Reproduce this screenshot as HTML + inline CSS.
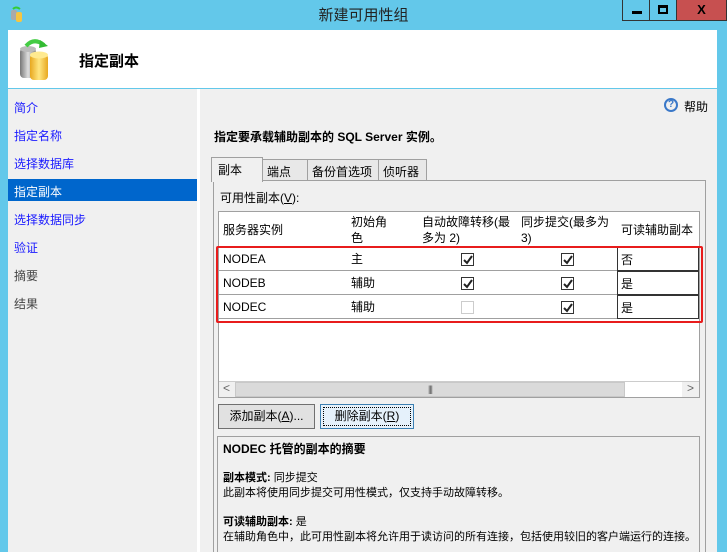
<!DOCTYPE html>
<html><head><meta charset="utf-8"><style>
*{box-sizing:border-box;margin:0;padding:0}
body{width:727px;height:552px;overflow:hidden;background:#63c8ea;font-family:"Liberation Sans","Noto Sans CJK SC",sans-serif;font-size:12px;color:#000;position:relative}
.a{position:absolute}
.nav div{position:absolute;left:6px;color:#1a1aff;font-size:12px}
.cell{position:absolute;border-right:1px solid #a0a0a0;border-bottom:1px solid #a0a0a0;padding-left:4px;display:flex;align-items:center;background:#fff}
.cb{position:absolute;width:13px;height:13px;border:1px solid #333;background:#fff}
.cb svg{position:absolute;left:1px;top:1px}
</style></head><body>
<div class="a" style="left:10px;top:6px;width:14px;height:16px">
<svg width="14" height="16"><rect x="1" y="4" width="6" height="10" rx="2" fill="#aaa"/><rect x="6" y="6" width="6" height="10" rx="2" fill="#f5c542"/><path d="M3 3 q3-3 7 0" stroke="#3c3" stroke-width="2" fill="none"/></svg></div>
<div class="a" style="left:0;top:4px;width:727px;text-align:center;font-size:15px;color:#222">新建可用性组</div>
<div class="a" style="left:622px;top:0;width:28px;height:21px;border:1px solid #333;border-top:none;background:#63c8ea"><div class="a" style="left:9px;top:11px;width:10px;height:3px;background:#000"></div></div>
<div class="a" style="left:649px;top:0;width:28px;height:21px;border:1px solid #333;border-top:none;background:#63c8ea"><div class="a" style="left:8px;top:5px;width:10px;height:9px;border:2px solid #000;border-top-width:3px"></div></div>
<div class="a" style="left:676px;top:0;width:51px;height:21px;border:1px solid #333;border-top:none;background:#c75050;color:#000;font-weight:bold;text-align:center;line-height:19px;font-size:13px">X</div>
<div class="a" style="left:8px;top:30px;width:709px;height:58px;background:#fff"></div>
<div class="a" style="left:18px;top:38px;width:42px;height:44px">
<svg width="42" height="44"><defs><linearGradient id="g" x1="0" x2="1"><stop offset="0" stop-color="#777"/><stop offset=".5" stop-color="#ddd"/><stop offset="1" stop-color="#888"/></linearGradient><linearGradient id="y" x1="0" x2="1"><stop offset="0" stop-color="#e8a820"/><stop offset=".5" stop-color="#ffe680"/><stop offset="1" stop-color="#e8a820"/></linearGradient></defs>
<rect x="2" y="10" width="16" height="30" rx="4" fill="url(#g)"/><ellipse cx="10" cy="11" rx="8" ry="3" fill="#bbb"/>
<rect x="12" y="16" width="18" height="26" rx="4" fill="url(#y)"/><ellipse cx="21" cy="17" rx="9" ry="3.5" fill="#ffea90"/>
<path d="M8 8 q8-9 18 -1" stroke="#4c4" stroke-width="4" fill="none"/><path d="M22 2 l8 6 -9 2z" fill="#3b3"/></svg></div>
<div class="a" style="left:79px;top:50px;font-size:15px;font-weight:bold">指定副本</div>
<div class="a nav" style="left:8px;top:89px;width:189px;height:463px;background:#f0f0f0">
<div style="top:10px">简介</div><div style="top:38px">指定名称</div><div style="top:66px">选择数据库</div>
<div style="left:0;top:90px;width:189px;height:22px;background:#0066cc"></div>
<div style="top:94px;color:#fff">指定副本</div>
<div style="top:122px">选择数据同步</div><div style="top:150px">验证</div>
<div style="top:178px;color:#444">摘要</div><div style="top:206px;color:#444">结果</div></div>
<div class="a" style="left:197px;top:89px;width:3px;height:463px;background:#fff"></div>
<div class="a" style="left:200px;top:89px;width:517px;height:463px;background:#f0f0f0"></div>
<div class="a" style="left:664px;top:98px;width:14px;height:14px;border-radius:50%;border:2px solid #3a78c8;color:#3a78c8;font-size:10px;font-weight:bold;text-align:center;line-height:10px">?</div>
<div class="a" style="left:684px;top:98px">帮助</div>
<div class="a" style="left:214px;top:128px;font-weight:bold">指定要承载辅助副本的 SQL Server 实例。</div>
<div class="a" style="left:213px;top:180px;width:493px;height:372px;border:1px solid #a0a0a0;border-bottom:none;background:#f0f0f0"></div>
<div class="a" style="left:262px;top:159px;width:46px;height:22px;border:1px solid #a0a0a0;background:#e8e8e8;padding:3px 4px">端点</div>
<div class="a" style="left:307px;top:159px;width:72px;height:22px;border:1px solid #a0a0a0;background:#e8e8e8;padding:3px 4px">备份首选项</div>
<div class="a" style="left:378px;top:159px;width:49px;height:22px;border:1px solid #a0a0a0;background:#e8e8e8;padding:3px 4px">侦听器</div>
<div class="a" style="left:211px;top:157px;width:52px;height:25px;border:1px solid #a0a0a0;border-bottom:none;background:#f0f0f0;padding:3px 6px">副本</div>
<div class="a" style="left:220px;top:189px">可用性副本(<u>V</u>):</div>
<div class="a" style="left:218px;top:211px;width:482px;height:187px;border:1px solid #a0a0a0;background:#fff"></div>
<div class="cell" style="left:219px;top:212px;width:129px;height:36px;border-right-color:#e0e0e0">服务器实例</div>
<div class="cell" style="left:347px;top:212px;width:72px;height:36px;line-height:16px;border-right-color:#e0e0e0">初始角<br>色</div>
<div class="cell" style="left:418px;top:212px;width:100px;height:36px;line-height:16px;border-right-color:#e0e0e0;white-space:nowrap;overflow:hidden">自动故障转移(最<br>多为 2)</div>
<div class="cell" style="left:517px;top:212px;width:101px;height:36px;line-height:16px;border-right-color:#e0e0e0;white-space:nowrap;overflow:hidden">同步提交(最多为<br>3)</div>
<div class="cell" style="left:617px;top:212px;width:82px;height:36px;border-right:none">可读辅助副本</div>
<div class="cell" style="left:219px;top:247px;width:129px;height:24px">NODEA</div>
<div class="cell" style="left:347px;top:247px;width:72px;height:24px">主</div>
<div class="cell" style="left:418px;top:247px;width:100px;height:24px"></div>
<div class="cell" style="left:517px;top:247px;width:101px;height:24px"></div>
<div class="cell" style="left:617px;top:247px;width:82px;height:24px;border:1px solid #333;padding-left:3px">否</div>
<div class="cell" style="left:219px;top:271px;width:129px;height:24px">NODEB</div>
<div class="cell" style="left:347px;top:271px;width:72px;height:24px">辅助</div>
<div class="cell" style="left:418px;top:271px;width:100px;height:24px"></div>
<div class="cell" style="left:517px;top:271px;width:101px;height:24px"></div>
<div class="cell" style="left:617px;top:271px;width:82px;height:24px;border:1px solid #333;padding-left:3px">是</div>
<div class="cell" style="left:219px;top:295px;width:129px;height:24px">NODEC</div>
<div class="cell" style="left:347px;top:295px;width:72px;height:24px">辅助</div>
<div class="cell" style="left:418px;top:295px;width:100px;height:24px"></div>
<div class="cell" style="left:517px;top:295px;width:101px;height:24px"></div>
<div class="cell" style="left:617px;top:295px;width:82px;height:24px;border:1px solid #333;padding-left:3px">是</div>
<div class="cb" style="left:461px;top:253px"><svg width="10" height="10"><path d="M1 5 l3 3 5-7" stroke="#222" stroke-width="2" fill="none"/></svg></div>
<div class="cb" style="left:561px;top:253px"><svg width="10" height="10"><path d="M1 5 l3 3 5-7" stroke="#222" stroke-width="2" fill="none"/></svg></div>
<div class="cb" style="left:461px;top:277px"><svg width="10" height="10"><path d="M1 5 l3 3 5-7" stroke="#222" stroke-width="2" fill="none"/></svg></div>
<div class="cb" style="left:561px;top:277px"><svg width="10" height="10"><path d="M1 5 l3 3 5-7" stroke="#222" stroke-width="2" fill="none"/></svg></div>
<div class="cb" style="left:461px;top:301px;border-color:#ccc"></div>
<div class="cb" style="left:561px;top:301px"><svg width="10" height="10"><path d="M1 5 l3 3 5-7" stroke="#222" stroke-width="2" fill="none"/></svg></div>
<div class="a" style="left:216px;top:246px;width:487px;height:77px;border:2px solid #e81c1c;border-radius:2px"></div>
<div class="a" style="left:219px;top:381px;width:480px;height:16px;background:#f0f0f0;border-top:1px solid #ccc"></div>
<div class="a" style="left:235px;top:382px;width:390px;height:15px;background:#dadada;border:1px solid #c8c8c8;text-align:center;font-size:9px;line-height:13px;color:#555;letter-spacing:-1px">|||</div>
<div class="a" style="left:625px;top:382px;width:57px;height:15px;background:#fff"></div>
<div class="a" style="left:223px;top:381px;color:#666;font-size:12px">&lt;</div>
<div class="a" style="left:687px;top:381px;color:#666;font-size:12px">&gt;</div>
<div class="a" style="left:218px;top:404px;width:97px;height:25px;border:1px solid #707070;background:#e1e1e1;text-align:center;line-height:23px">添加副本(<u>A</u>)...</div>
<div class="a" style="left:320px;top:404px;width:94px;height:25px;border:1px solid #3c7fb1;background:#e5f1fb;padding:2px"><div style="border:1px dotted #000;height:19px;text-align:center;line-height:17px">删除副本(<u>R</u>)</div></div>
<div class="a" style="left:217px;top:436px;width:483px;height:116px;border:1px solid #a0a0a0;border-bottom:none;background:#f0f0f0;padding:5px 5px;font-size:11px;line-height:15px">
<div style="font-weight:bold;font-size:12px">NODEC 托管的副本的摘要</div>
<div style="height:14px"></div>
<div><b>副本模式:</b> 同步提交</div>
<div>此副本将使用同步提交可用性模式，仅支持手动故障转移。</div>
<div style="height:14px"></div>
<div><b>可读辅助副本:</b> 是</div>
<div style="white-space:nowrap">在辅助角色中，此可用性副本将允许用于读访问的所有连接，包括使用较旧的客户端运行的连接。</div>
</div>
</body></html>
